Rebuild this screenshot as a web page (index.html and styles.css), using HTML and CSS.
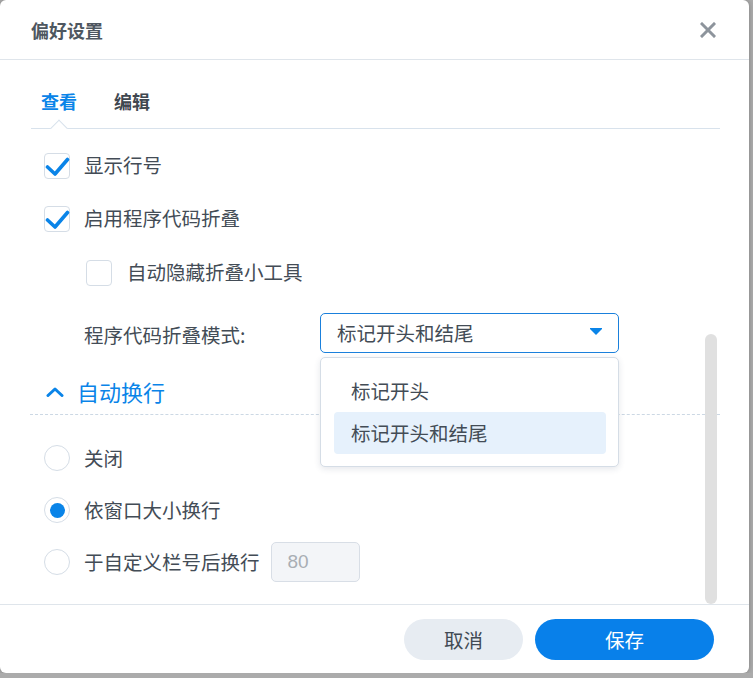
FILE: index.html
```html
<!DOCTYPE html>
<html lang="zh-CN">
  <head>
    <meta charset="UTF-8" />
    <meta name="viewport" content="width=device-width, initial-scale=1.0" />
    <title>偏好设置</title>
    <link rel="stylesheet" href="styles.css">
  </head>
  <body>
    <div class="dialog">
      <div class="dialog-header">
        <span class="dialog-title">偏好设置</span>
        <span class="close-btn">
          <svg width="16" height="16" viewBox="0 0 16 16"><path d="M2 2 L14 14 M14 2 L2 14" stroke="#8d949c" stroke-width="3" stroke-linecap="square" fill="none"/></svg>
        </span>
      </div>

      <div class="tabs">
        <span class="tab active">查看</span>
        <span class="tab">编辑</span>
      </div>

      <div class="dialog-body">
        <div class="row">
          <span class="checkbox"><svg width="26" height="26" viewBox="0 0 26 26"><path d="M3.5 14 L11 21 L23.5 6.5" stroke="#0a84e8" stroke-width="3.6" stroke-linecap="round" stroke-linejoin="round" fill="none"/></svg></span>
          <span class="label">显示行号</span>
        </div>
        <div class="row">
          <span class="checkbox"><svg width="26" height="26" viewBox="0 0 26 26"><path d="M3.5 14 L11 21 L23.5 6.5" stroke="#0a84e8" stroke-width="3.6" stroke-linecap="round" stroke-linejoin="round" fill="none"/></svg></span>
          <span class="label">启用程序代码折叠</span>
        </div>
        <div class="row row-sub">
          <span class="checkbox"></span>
          <span class="label">自动隐藏折叠小工具</span>
        </div>

        <div class="field-row">
          <span class="field-label">程序代码折叠模式:</span>
          <div class="select-wrap">
            <div class="select">
              <span>标记开头和结尾</span>
              <svg width="12" height="7" viewBox="0 0 12 7"><path d="M0 0 H12 V1 L6 7 L0 1 Z" fill="#0a84e8"/></svg>
            </div>
            <ul class="menu">
              <li class="menu-item">标记开头</li>
              <li class="menu-item selected">标记开头和结尾</li>
            </ul>
          </div>
        </div>

        <div class="section-head">
          <svg width="18" height="10" viewBox="0 0 18 10"><path d="M2 8.5 L9 2 L16 8.5" stroke="#0a84e8" stroke-width="3" stroke-linecap="round" stroke-linejoin="round" fill="none"/></svg>
          <span>自动换行</span>
        </div>

        <div class="row row-radio">
          <span class="radio"></span>
          <span class="label">关闭</span>
        </div>
        <div class="row row-radio">
          <span class="radio checked"></span>
          <span class="label">依窗口大小换行</span>
        </div>
        <div class="row row-radio">
          <span class="radio"></span>
          <span class="label">于自定义栏号后换行</span>
          <span class="num-input">80</span>
        </div>

        <!-- scroll thumb sits over the content -->
        <div class="scrollbar"></div>
      </div>

      <div class="dialog-footer">
        <button class="btn btn-cancel">取消</button>
        <button class="btn btn-save">保存</button>
      </div>
    </div>
  </body>
</html>
```

FILE: styles.css
```css
html {
  background-color: #ababab;
}
body {
  margin: 0;
  font-family: "Noto Sans CJK SC", "Noto Sans", sans-serif;
  color: #434c56;
}
.dialog {
  width: 749px;
  height: 673px;
  background-color: #fff;
  border-radius: 6px;
  box-shadow: 0 0 5px rgba(0, 0, 0, 0.25);
  display: flex;
  flex-direction: column;
  overflow: hidden;
}
.dialog-header {
  height: 59px;
  flex: none;
  border-bottom: 1px solid #dfe5eb;
  display: flex;
  align-items: center;
  justify-content: space-between;
  padding: 0 33px 0 31px;
}
.dialog-title {
  font-size: 18px;
  font-weight: 700;
  color: #4e5760;
  line-height: 24px;
  margin-top: 1px;
}
.close-btn {
  display: flex;
  margin-top: 1px;
}
.tabs {
  flex: none;
  display: flex;
  gap: 37px;
  margin: 0 29px 0 31px;
  padding: 28px 0 14px 10px;
  border-bottom: 1px solid #d8e2ec;
}
.tab {
  font-size: 18px;
  font-weight: 700;
  line-height: 26px;
  color: #3f4750;
  position: relative;
}
.tab.active {
  color: #0a84e8;
}
.tab.active::after {
  content: "";
  position: absolute;
  left: 50%;
  top: calc(100% + 8px);
  width: 12px;
  height: 12px;
  margin-left: -6px;
  background-color: #fff;
  border-top: 1px solid #d8e2ec;
  border-left: 1px solid #d8e2ec;
  transform: rotate(45deg);
  box-sizing: border-box;
}
.dialog-body {
  flex: 1;
  position: relative;
  padding: 10px 29px 0 30px;
}
.row {
  height: 53px;
  display: flex;
  align-items: center;
  padding-left: 14px;
  font-size: 19.5px;
}
.row-sub {
  height: 55px;
  padding-left: 56px;
}
.row-sub .label {
  margin-left: 15px;
}
.label {
  margin-left: 14px;
  line-height: 28px;
  margin-top: -1px;
}
.checkbox {
  width: 26px;
  height: 26px;
  box-sizing: border-box;
  border: 1.5px solid #d5dde6;
  border-radius: 4px;
  display: flex;
  align-items: center;
  justify-content: center;
  flex: none;
}
.checkbox svg {
  margin: -1.5px;
}
.field-row {
  margin-top: 13px;
  height: 40px;
  display: flex;
  align-items: center;
  padding-left: 54px;
  font-size: 19.5px;
}
.field-label {
  width: 236px;
  line-height: 28px;
  margin-top: 3px;
}
.select-wrap {
  position: relative;
}
.select {
  width: 299px;
  height: 40px;
  box-sizing: border-box;
  border: 1px solid #1a80dc;
  border-radius: 5px;
  display: flex;
  align-items: center;
  justify-content: space-between;
  padding: 0 16px 0 16px;
}
.select span {
  line-height: 28px;
}
.select svg {
  margin-top: -3px;
}
.menu {
  position: absolute;
  left: 0;
  top: calc(100% + 4px);
  width: 299px;
  box-sizing: border-box;
  margin: 0;
  padding: 12px 12px 12px 13px;
  list-style: none;
  background-color: #fff;
  border: 1px solid #d5dde6;
  border-radius: 5px;
  box-shadow: 0 2px 6px rgba(40, 60, 90, 0.12);
}
.menu-item {
  height: 42px;
  line-height: 42px;
  padding-left: 17px;
  border-radius: 4px;
}
.menu-item.selected {
  background-color: #e6f1fc;
}
.section-head {
  margin-top: 23px;
  height: 30px;
  padding: 0 0 8px 16px;
  border-bottom: 1px dashed #ccd8e4;
  display: flex;
  align-items: center;
  gap: 13px;
  color: #0a84e8;
  font-size: 22px;
}
.section-head svg {
  margin-top: 2px;
}
.row-radio {
  height: 52px;
}
.section-head + .row-radio {
  margin-top: 17px;
}
.radio {
  width: 26px;
  height: 26px;
  box-sizing: border-box;
  border: 1.5px solid #d5dde6;
  border-radius: 50%;
  flex: none;
  display: flex;
  align-items: center;
  justify-content: center;
}
.radio.checked::after {
  content: "";
  width: 15px;
  height: 15px;
  border-radius: 50%;
  background-color: #0a84e8;
}
.num-input {
  margin-left: 11px;
  width: 89px;
  height: 40px;
  box-sizing: border-box;
  border: 1px solid #d8dee6;
  border-radius: 5px;
  background-color: #f3f5f8;
  color: #a9aeb4;
  font-family: "Liberation Sans", Arial, sans-serif;
  font-size: 19px;
  line-height: 38px;
  padding-left: 16px;
}
.scrollbar {
  position: absolute;
  right: 32px;
  top: 205px;
  width: 12px;
  height: 270px;
  border-radius: 6px;
  background-color: #e0e0e0;
}
.dialog-footer {
  flex: none;
  height: 68px;
  border-top: 1px solid #dfe5eb;
  display: flex;
  align-items: center;
  justify-content: flex-end;
  gap: 12px;
  padding-right: 35px;
}
.btn {
  height: 41px;
  border: none;
  border-radius: 21px;
  font-family: "Noto Sans CJK SC", sans-serif;
  font-size: 19.5px;
  cursor: pointer;
  padding: 0;
}
.btn-cancel {
  width: 119px;
  background-color: #e7ecf2;
  color: #414a54;
}
.btn-save {
  width: 179px;
  background-color: #0880ea;
  color: #fff;
}
```
